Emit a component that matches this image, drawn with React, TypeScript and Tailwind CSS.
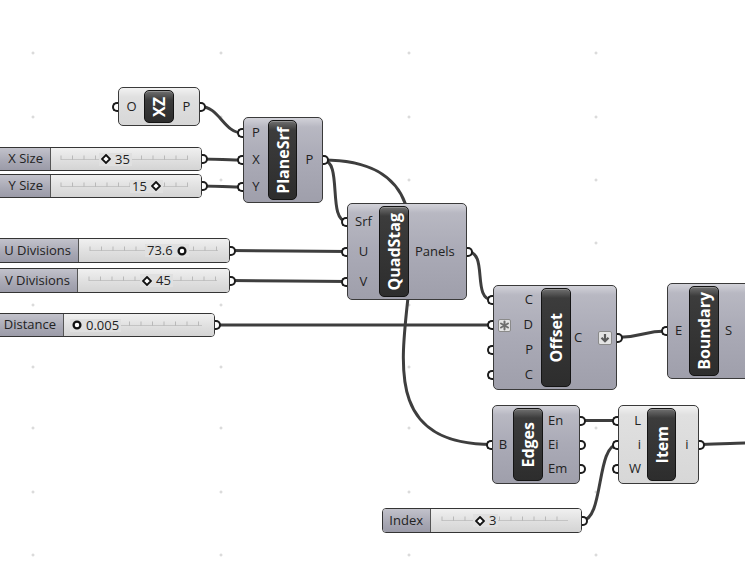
import React from "react";

type Row = { label: string; icon?: "star" | "arrow" };

const dotXs = [33, 221, 409, 596];
const dotYs = [53, 117, 180, 243, 305, 367, 428, 492, 555];

// [x1, y1, x2, y2, control offset]
const wires: [number, number, number, number, number][] = [
	[200, 106.5, 243, 133, 20],
	[202, 159, 243, 160, 10],
	[202, 186, 243, 187, 10],
	[323, 160, 347, 221.5, 20],
	[323, 160, 492, 444.5, 200],
	[230, 250.5, 347, 251.5, 10],
	[230, 280.5, 347, 281.5, 10],
	[215, 325, 493, 325, 10],
	[467, 251.5, 493, 300, 22],
	[617, 337.5, 667, 331, 25],
	[580, 420.5, 618, 420.5, 10],
	[582, 520.5, 618, 444.5, 22],
	[699, 444.5, 745, 443, 10],
];

function bez(x1: number, y1: number, x2: number, y2: number, d: number) {
	return `M${x1} ${y1} C${x1 + d} ${y1} ${x2 - d} ${y2} ${x2} ${y2}`;
}

function InPort() {
	return (
		<span className="absolute left-[-7px] top-1/2 h-[10px] w-[6px] -translate-y-1/2 rounded-l-full border-2 border-r-0 border-[#1d1d1d] bg-white" />
	);
}

function OutPort() {
	return (
		<span className="absolute right-[-7px] top-1/2 h-[10px] w-[6px] -translate-y-1/2 rounded-r-full border-2 border-l-0 border-[#1d1d1d] bg-white" />
	);
}

function StarBox() {
	return (
		<span className="flex h-[13px] w-[13px] items-center justify-center rounded-[2px] border border-[#8a8a8a] bg-[#e4e4e4]">
			<svg width="11" height="11" viewBox="0 0 11 11">
				<g stroke="#6e6e6e" strokeWidth="2" strokeLinecap="round">
					<line x1="5.5" y1="1.5" x2="5.5" y2="9.5" />
					<line x1="2" y1="3.5" x2="9" y2="7.5" />
					<line x1="2" y1="7.5" x2="9" y2="3.5" />
				</g>
			</svg>
		</span>
	);
}

function ArrowBox() {
	return (
		<span className="flex h-[14px] w-[14px] items-center justify-center rounded-[2px] border border-[#8a8a8a] bg-[#e4e4e4]">
			<svg width="10" height="10" viewBox="0 0 10 10">
				<path d="M5 1 V8 M1.5 4.8 L5 8.3 L8.5 4.8" stroke="#5a5a5a" strokeWidth="2.2" fill="none" />
			</svg>
		</span>
	);
}

function Pill({ name, className }: { name: string; className: string }) {
	return (
		<div
			className={`my-[2px] flex shrink-0 items-center justify-center rounded-[5px] border border-[#141414] bg-[linear-gradient(to_bottom,#707070_0px,#3c3c3c_9px,#2d2d2d_100%)] shadow-[inset_0_1px_0_rgba(255,255,255,0.25)] ${className}`}
		>
			<span className="rotate-180 text-[16px] font-bold leading-none text-white [writing-mode:vertical-rl]">
				{name}
			</span>
		</div>
	);
}

type NodeProps = {
	className: string;
	name: string;
	light?: boolean;
	inColClass: string;
	pillClass: string;
	inputs: Row[];
	outputs: Row[];
	inRowClass: string;
	outRowClass: string;
};

function GraphNode({
	className,
	name,
	light,
	inColClass,
	pillClass,
	inputs,
	outputs,
	inRowClass,
	outRowClass,
}: NodeProps) {
	const bg = light
		? "bg-[linear-gradient(to_bottom,#f2f2f2_0px,#e0e0e0_9px,#d7d7d7_100%)]"
		: "bg-[linear-gradient(to_bottom,#d2d2d9_0px,#b8b8c2_9px,#aaaab6_50%,#9f9fab_100%)]";
	return (
		<div
			className={`absolute flex rounded-[5px] border border-[#3a3a3a] text-[13px] text-[#222] ${bg} ${className}`}
		>
			<div className={`flex shrink-0 flex-col justify-center ${inColClass}`}>
				{inputs.map((p, i) => (
					<div key={i} className={`relative flex items-center ${inRowClass}`}>
						<InPort />
						{p.icon === "star" ? <StarBox /> : null}
						<span className="ml-auto mr-auto last:ml-auto">{p.label}</span>
					</div>
				))}
			</div>
			<Pill name={name} className={pillClass} />
			<div className="flex flex-1 flex-col justify-center">
				{outputs.map((p, i) => (
					<div key={i} className={`relative flex items-center ${outRowClass}`}>
						<span>{p.label}</span>
						{p.icon === "arrow" ? (
							<span className="ml-auto mr-[4px]">
								<ArrowBox />
							</span>
						) : null}
						<OutPort />
					</div>
				))}
			</div>
		</div>
	);
}

type SliderProps = {
	className: string;
	labelClass: string;
	label: string;
	value: string;
	grip: "diamond" | "circle";
	gripFirst: boolean;
	valueClass: string;
	ticks: [number, number];
};

function Grip({ kind }: { kind: "diamond" | "circle" }) {
	return kind === "diamond" ? (
		<svg width="10" height="10" viewBox="0 0 10 10">
			<polygon points="5,1 9,5 5,9 1,5" fill="white" stroke="#111" strokeWidth="1.8" />
		</svg>
	) : (
		<svg width="10" height="10" viewBox="0 0 10 10">
			<circle cx="5" cy="5" r="3.4" fill="white" stroke="#111" strokeWidth="2.3" />
		</svg>
	);
}

function Slider({ className, labelClass, label, value, grip, gripFirst, valueClass, ticks }: SliderProps) {
	const marks: number[] = [];
	for (let x = ticks[0]; x <= ticks[1]; x += 11.5) marks.push(x);
	return (
		<div className={`absolute flex rounded-[4px] border border-[#343434] text-[13px] text-[#222] ${className}`}>
			<div
				className={`flex shrink-0 items-center justify-end rounded-l-[3px] border-r border-[#555] bg-[linear-gradient(to_bottom,#c2c2cb_0px,#a8a8b4_60%,#9b9ba8_100%)] pr-[7px] ${labelClass}`}
			>
				{label}
			</div>
			<div className="relative flex-1 rounded-r-[3px] bg-[linear-gradient(to_bottom,#f0f0f0_0px,#e1e1e1_50%,#d4d4d4_100%)]">
				<svg className="absolute inset-0 h-full w-full">
					<line x1={ticks[0]} y1="11.5" x2={ticks[1]} y2="11.5" stroke="#c4c4c4" strokeWidth="1" />
					{marks.map((x) => (
						<line key={x} x1={x} y1="7.5" x2={x} y2="12" stroke="#b9b9b9" strokeWidth="1" />
					))}
				</svg>
				<div className={`absolute top-0 flex h-full items-center ${valueClass}`}>
					<span className="flex items-center gap-[4px] bg-[#e0e0e0] px-[2px] leading-none">
						{gripFirst ? <Grip kind={grip} /> : null}
						<span>{value}</span>
						{!gripFirst ? <Grip kind={grip} /> : null}
					</span>
				</div>
			</div>
			<OutPort />
		</div>
	);
}

export default function App() {
	return (
		<div className="relative h-[576px] w-[745px] overflow-hidden bg-white font-['Open_Sans',sans-serif]">
			<svg className="absolute inset-0" width="745" height="576">
				{dotXs.map((x) =>
					dotYs.map((y) => (
						<g key={`${x}-${y}`} stroke="#cfcfcf" strokeWidth="1">
							<line x1={x - 1.5} y1={y} x2={x + 1.5} y2={y} />
							<line x1={x} y1={y - 1.5} x2={x} y2={y + 1.5} />
						</g>
					)),
				)}
				{wires.map((w, i) => (
					<path
						key={i}
						d={bez(w[0], w[1], w[2], w[3], w[4])}
						stroke="#3e3e3e"
						strokeWidth="3"
						fill="none"
					/>
				))}
			</svg>

			<Slider
				className="left-[-6px] top-[147px] h-[24px] w-[208px]"
				labelClass="w-[56px]"
				label="X Size"
				value="35"
				grip="diamond"
				gripFirst
				valueClass="left-[48px]"
				ticks={[10, 137]}
			/>
			<Slider
				className="left-[-6px] top-[174px] h-[24px] w-[208px]"
				labelClass="w-[56px]"
				label="Y Size"
				value="15"
				grip="diamond"
				gripFirst={false}
				valueClass="left-[79px]"
				ticks={[10, 137]}
			/>
			<Slider
				className="left-[-6px] top-[238px] h-[25px] w-[236px]"
				labelClass="w-[84px]"
				label="U Divisions"
				value="73.6"
				grip="circle"
				gripFirst={false}
				valueClass="left-[66px]"
				ticks={[11, 139]}
			/>
			<Slider
				className="left-[-6px] top-[268px] h-[25px] w-[236px]"
				labelClass="w-[83px]"
				label="V Divisions"
				value="45"
				grip="diamond"
				gripFirst
				valueClass="left-[62px]"
				ticks={[11, 139]}
			/>
			<Slider
				className="left-[-6px] top-[313px] h-[24px] w-[221px]"
				labelClass="w-[69px]"
				label="Distance"
				value="0.005"
				grip="circle"
				gripFirst
				valueClass="left-[6px]"
				ticks={[8, 138]}
			/>
			<Slider
				className="left-[382px] top-[508px] h-[25px] w-[200px]"
				labelClass="w-[48px]"
				label="Index"
				value="3"
				grip="diamond"
				gripFirst
				valueClass="left-[42px]"
				ticks={[11, 137]}
			/>

			<GraphNode
				className="left-[118px] top-[87px] h-[39px] w-[82px]"
				name="XZ"
				light
				inColClass="w-[25px]"
				pillClass="w-[30px]"
				inputs={[{ label: "O" }]}
				outputs={[{ label: "P" }]}
				inRowClass="h-[27px] justify-center"
				outRowClass="h-[27px] justify-center"
			/>
			<GraphNode
				className="left-[243px] top-[117px] h-[86px] w-[80px]"
				name="PlaneSrf"
				inColClass="w-[24px]"
				pillClass="w-[29px]"
				inputs={[{ label: "P" }, { label: "X" }, { label: "Y" }]}
				outputs={[{ label: "P" }]}
				inRowClass="h-[27px] justify-center"
				outRowClass="h-[27px] justify-center"
			/>
			<GraphNode
				className="left-[347px] top-[203px] h-[97px] w-[120px]"
				name="QuadStag"
				inColClass="w-[31px]"
				pillClass="w-[30px]"
				inputs={[{ label: "Srf" }, { label: "U" }, { label: "V" }]}
				outputs={[{ label: "Panels" }]}
				inRowClass="h-[30px] justify-center"
				outRowClass="h-[30px] pl-[6px]"
			/>
			<GraphNode
				className="left-[493px] top-[285px] h-[105px] w-[124px]"
				name="Offset"
				inColClass="w-[47px]"
				pillClass="w-[30px]"
				inputs={[{ label: "C" }, { label: "D", icon: "star" }, { label: "P" }, { label: "C" }]}
				outputs={[{ label: "C", icon: "arrow" }]}
				inRowClass="h-[25px] pl-[4px] pr-[8px] [&>span:last-child]:mr-0"
				outRowClass="h-[25px] pl-[3px]"
			/>
			<GraphNode
				className="left-[667px] top-[283px] h-[96px] w-[84px]"
				name="Boundary"
				inColClass="w-[21px]"
				pillClass="w-[30px]"
				inputs={[{ label: "E" }]}
				outputs={[{ label: "S" }]}
				inRowClass="h-[27px] justify-center"
				outRowClass="h-[27px] pl-[6px]"
			/>
			<GraphNode
				className="left-[492px] top-[405px] h-[79px] w-[88px]"
				name="Edges"
				inColClass="w-[20px]"
				pillClass="w-[30px]"
				inputs={[{ label: "B" }]}
				outputs={[{ label: "En" }, { label: "Ei" }, { label: "Em" }]}
				inRowClass="h-[24px] justify-center"
				outRowClass="h-[24px] pl-[5px]"
			/>
			<GraphNode
				className="left-[618px] top-[405px] h-[79px] w-[81px]"
				name="Item"
				light
				inColClass="w-[28px]"
				pillClass="w-[29px]"
				inputs={[{ label: "L" }, { label: "i" }, { label: "W" }]}
				outputs={[{ label: "i" }]}
				inRowClass="h-[24px] pr-[6px] [&>span:last-child]:mr-0"
				outRowClass="h-[24px] justify-center"
			/>
		</div>
	);
}
